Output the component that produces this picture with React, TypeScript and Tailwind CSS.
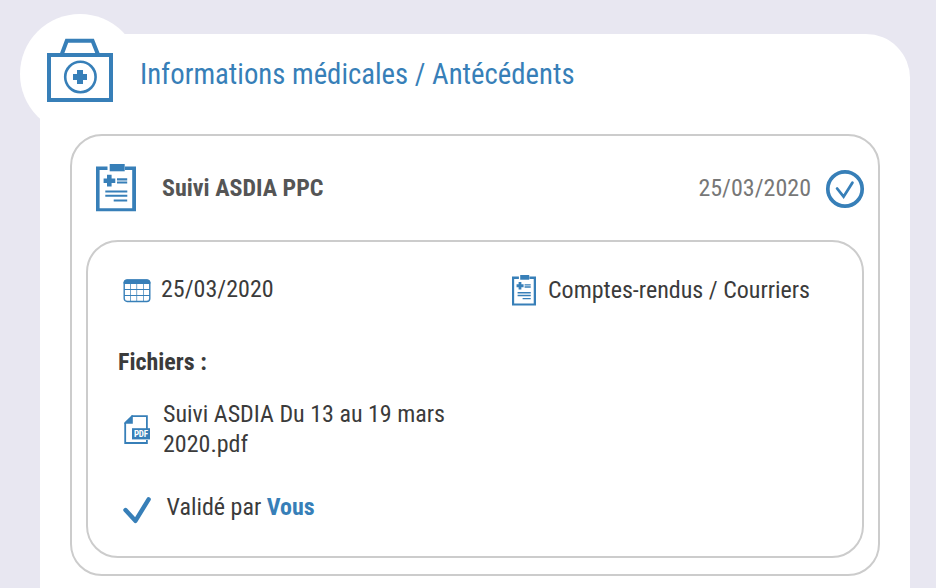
import type { ReactNode } from "react";

function MedicalBag() {
  return (
    <svg className="block h-[66px] w-[68px]" viewBox="0 0 68 66" fill="none" stroke="#377fb8">
      <rect x="3" y="17" width="62" height="45" strokeWidth="4" />
      <path d="M15.5 17 20.8 2.8H46.5L52.2 17" strokeWidth="4" />
      <circle cx="34.4" cy="39" r="15.2" strokeWidth="2.6" />
      <path d="M34 32v14M27 39h14" strokeWidth="6" />
    </svg>
  );
}

function Clipboard({ className }: { className: string }) {
  return (
    <svg className={className} viewBox="0 0 40 48" preserveAspectRatio="none" fill="#377fb8">
      <path d="M0 2.4H11.5V6H3.6V44.2H36.2V6H29V2.4H40V47.2H0Z" />
      <rect x="13.7" y="0" width="15" height="7.3" />
      <path d="M11 10.7h4.6v3.8h3.7v4.4h-3.7v3.6H11v-3.6H7.6v-4.4H11Z" />
      <path d="M21 14.3h10.2v2.1H21zM21 17.5h10.2v2.1H21zM9.3 26.5h22v2.1h-22zM9.3 30.7h22v2.1h-22zM17.7 35.5h13.5v2.1H17.7z" />
    </svg>
  );
}

function CircledCheck() {
  return (
    <svg className="block h-10 w-10" viewBox="0 0 40 40" fill="none" stroke="#377fb8">
      <circle cx="20" cy="20" r="17.2" strokeWidth="3.7" />
      <path d="m12.1 19.5 6.5 8.2 8.8-14" strokeWidth="2.8" strokeLinecap="round" />
    </svg>
  );
}

function CalendarIcon() {
  return (
    <svg className="block h-6 w-7" viewBox="0 0 28 24" fill="none" stroke="#377fb8">
      <rect x="1.2" y="1" width="25.6" height="21.5" rx="3" strokeWidth="1.4" />
      <path d="M1 4.5V3.5Q1.5 1 4 1H24Q26.5 1 27 3.5V4.5Z" fill="#377fb8" />
      <path d="M1 10.5h26M1 16.5h26" strokeWidth="1" />
      <path d="M7.5 5v17M13.7 5v17M20.5 5v17" strokeWidth=".7" />
    </svg>
  );
}

function PdfIcon() {
  return (
    <svg className="block h-[30px] w-[27px]" viewBox="0 0 27 30">
      <path d="M7.5 1.1H22.9V14M22.9 25V28H1.2V8" fill="none" stroke="#377fb8" strokeWidth="1.8" />
      <path d="M.3 8.8V7.6L7.8.2H8.8V8.8Z" fill="#377fb8" />
      <rect x="8" y="13.2" width="18" height="11.2" fill="#377fb8" />
      <text x="17" y="22" textAnchor="middle" textLength="14" fill="white" className="text-[9px] font-bold">PDF</text>
    </svg>
  );
}

function CheckIcon() {
  return (
    <svg className="block h-[28px] w-7" viewBox="0 0 28 28" fill="none" stroke="#377fb8">
      <path d="m2.5 14 9.9 10.8L25.6 3.4" strokeWidth="4.4" strokeLinecap="round" strokeLinejoin="round" />
    </svg>
  );
}

function Label({ className, children }: { className: string; children: ReactNode }) {
  return <span className={`block whitespace-nowrap ${className}`}>{children}</span>;
}

export default function App() {
  return (
    <div className="h-[588px] w-[936px] overflow-hidden bg-[#e8e7f1] pl-10 pr-[26px] pt-[34px] font-['Roboto_Condensed','Roboto',sans-serif] text-2xl leading-[30px] text-[#3b3b3b] [font-stretch:75%]">
      <main className="relative h-[600px] rounded-tr-[44px] bg-white px-[30px]">
        <div className="absolute -left-5 -top-5 h-[120px] w-[120px] rounded-full bg-white pl-[26px] pt-6">
          <MedicalBag />
        </div>
        <header className="flex h-[100px] pl-[70px] pt-[21px]">
          <Label className="text-[28.75px] leading-[38px] text-[#377fb8]">Informations médicales / Antécédents</Label>
        </header>
        <section className="h-[442px] rounded-[32px] border-2 border-[#cccccc] px-[14px]">
          <div className="flex h-[104px] pl-[10px]">
            <Clipboard className="mt-7 block h-12 w-10" />
            <Label className="ml-[26px] mt-[37px] font-bold text-[#555555]">Suivi ASDIA PPC</Label>
            <Label className="ml-auto mr-[14px] mt-[37px] text-[#777777]">25/03/2020</Label>
            <div className="-mr-px mt-[33px]"><CircledCheck /></div>
          </div>
          <article className="h-[318px] rounded-[32px] border-2 border-[#cccccc] pl-[30px]">
            <div className="flex h-[105px]">
              <div className="ml-[5px] mt-[37px]"><CalendarIcon /></div>
              <Label className="ml-[10px] mt-8 w-[351px]">25/03/2020</Label>
              <Clipboard className="mt-[33px] block h-[31px] w-6" />
              <Label className="ml-3 mt-[33px]">Comptes-rendus / Courriers</Label>
            </div>
            <Label className="h-[52px] font-bold">Fichiers :</Label>
            <div className="flex h-[93px]">
              <div className="ml-[6px] mt-4"><PdfIcon /></div>
              <p className="ml-3 w-[300px]">Suivi ASDIA Du 13 au 19 mars 2020.pdf</p>
            </div>
            <div className="flex">
              <div className="ml-[5px] mt-1"><CheckIcon /></div>
              <Label className="ml-[15.5px]">Validé par <strong className="font-bold text-[#377fb8]">Vous</strong></Label>
            </div>
          </article>
        </section>
      </main>
    </div>
  );
}
